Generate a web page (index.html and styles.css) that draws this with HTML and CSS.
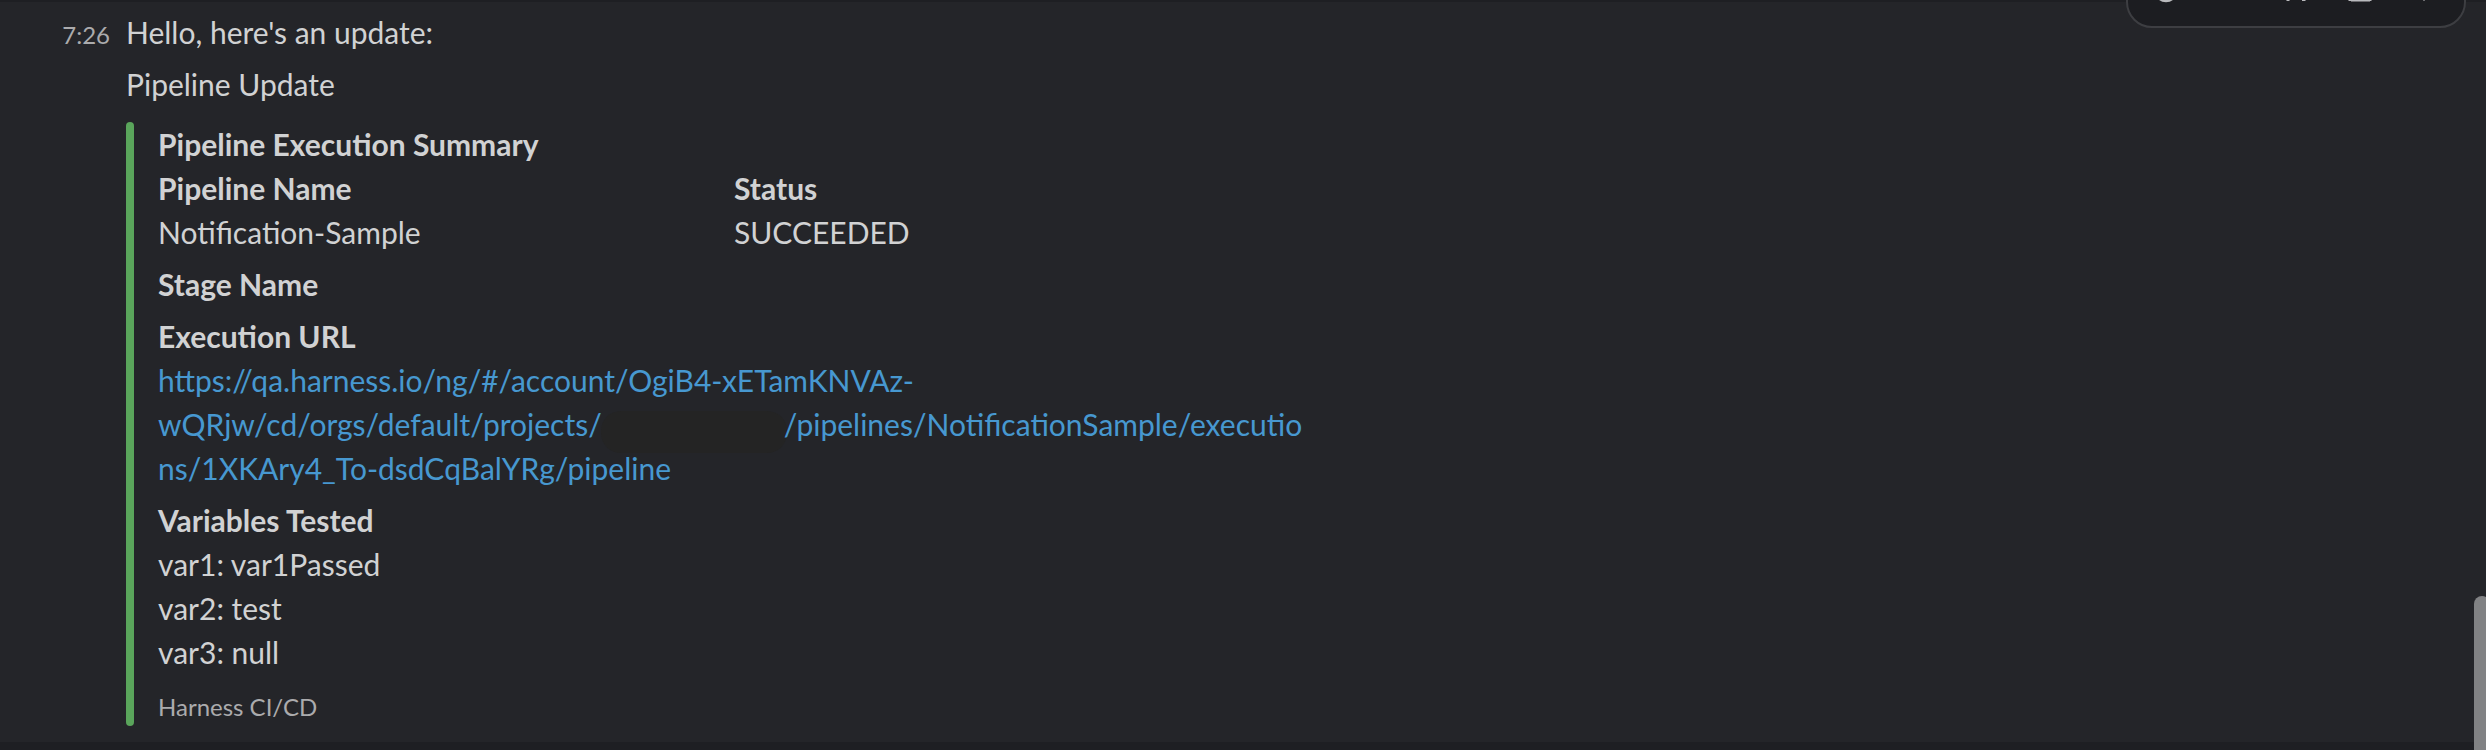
FILE: index.html
```html
<!DOCTYPE html>
<html lang="en">
<head>
<meta charset="utf-8">
<title>Pipeline Update</title>
<link rel="stylesheet" href="styles.css">
</head>
<body>
<main class="channel">
  <article class="message">
    <time class="time">7:26</time>
    <div class="content">
      <p class="block">Hello, here's an update:</p>
      <p class="block">Pipeline Update</p>
      <section class="attachment">
        <div class="bar"></div>
        <div class="details">
          <div>
            <h2 class="label">Pipeline Execution Summary</h2>
            <div class="fields">
              <div><h3 class="label">Pipeline Name</h3><p class="value">Notification-Sample</p></div>
              <div><h3 class="label">Status</h3><p class="value">SUCCEEDED</p></div>
            </div>
          </div>
          <h3 class="label">Stage Name</h3>
          <div>
            <h3 class="label">Execution URL</h3>
            <a class="link">https://qa.harness.io/ng/#/account/OgiB4-xETamKNVAz-<br>wQRjw/cd/orgs/default/projects/<span class="redacted"></span>/pipelines/NotificationSample/executio<br>ns/1XKAry4_To-dsdCqBalYRg/pipeline</a>
          </div>
          <div>
            <h3 class="label">Variables Tested</h3>
            <p class="value">var1: var1Passed</p>
            <p class="value">var2: test</p>
            <p class="value">var3: null</p>
          </div>
          <p class="footer">Harness CI/CD</p>
        </div>
      </section>
    </div>
  </article>
  <div class="toolbar">
    <svg class="icons" width="336" height="28" viewBox="0 0 336 28">
      <ellipse class="glyph" cx="38" cy="-6" rx="10" ry="8.3"/>
      <path class="glyph" d="M158 0h4l-1 1h-2zM174 0h4l-1 1h-3zM220 0h24l-1 1h-22z"/>
      <path class="glyph soft" d="M223 1h19v1h-19zM295 0h2v1h-2z"/>
    </svg>
  </div>
  <div class="scrollbar"></div>
</main>
</body>
</html>
```
FILE: styles.css
```css
* { box-sizing: border-box; }
body { margin: 0; background: #242529; }
h2, h3, p { margin: 0; font-size: inherit; }
.channel {
  position: relative;
  height: 750px;
  overflow: hidden;
  background: linear-gradient(#1e1f23 2px, #242529 2px, #242529 742px, #1e1f23 742px);
  color: #d1d2d3;
  font: 30px/44px Lato, sans-serif;
}
.message { display: flex; align-items: baseline; padding-top: 10px; }
.time {
  width: 126px;
  padding-right: 16px;
  text-align: right;
  font-size: 24px;
  line-height: 36px;
  color: #ababad;
}
.content { display: flex; flex-direction: column; gap: 8px; }
.attachment { display: flex; gap: 24px; padding-top: 8px; }
.bar { width: 8px; height: 604px; border-radius: 4px; background: #5aa55b; }
.details { display: flex; flex-direction: column; gap: 8px; }
.label { font-weight: 700; }
.fields { display: grid; grid-template-columns: 576px 576px; }
.link { display: block; color: #4798d0; }
.redacted {
  display: inline-block;
  width: 186px;
  height: 42px;
  border-radius: 20px;
  background: #242424;
  vertical-align: -9px;
  margin: -8px -3px -8px -1px;
}
.footer { font-size: 24px; line-height: 36px; padding-top: 7px; color: #ababad; }
.toolbar {
  position: absolute;
  top: -40px;
  right: 20px;
  width: 340px;
  height: 68px;
  border: 2px solid #3d3e42;
  border-radius: 26px;
  background: #1c1d21;
  display: flex;
  align-items: flex-end;
}
/* The SVG box spans from the viewport top to just below the border. */
.icons { margin-bottom: -2px; }
.glyph { fill: #b9babd; }
.soft { opacity: 0.5; }
.scrollbar {
  position: absolute;
  top: 596px;
  right: -4px;
  width: 16px;
  height: 300px;
  border-radius: 8px;
  background: #818284;
}
```
